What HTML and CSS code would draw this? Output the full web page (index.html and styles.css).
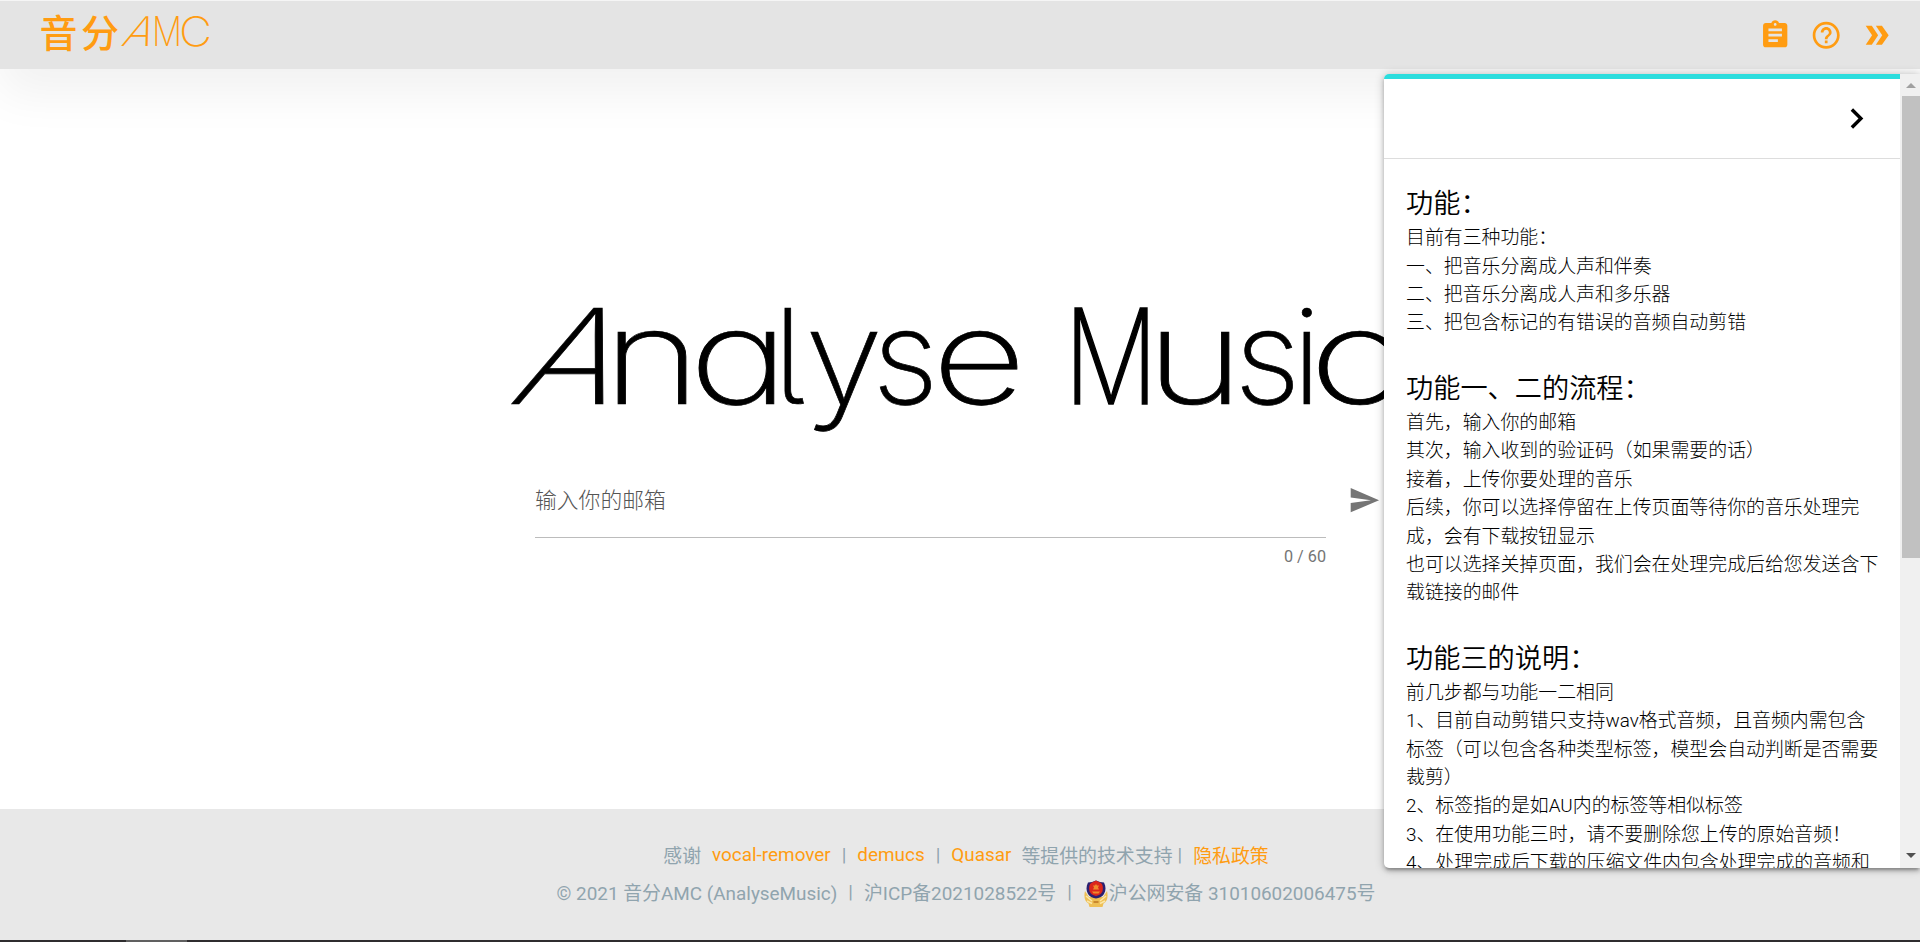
FILE: index.html
```html
<!DOCTYPE html>
<html lang="zh-CN">
<head>
<meta charset="utf-8">
<title>音分AMC</title>
<link rel="stylesheet" href="styles.css">
</head>
<body>
<div class="page">
  <header class="topbar">
    <svg class="brand" width="180" height="56" viewBox="0 0 180 56" role="img" aria-label="音分AMC">
      <text class="brand-cn" x="-0.500 41" y="34">音分</text>
      <text class="brand-en" transform="translate(80 32.500) skewX(-23) scale(1.080 1)">A</text>
      <text class="brand-en" y="32.500"><tspan x="112" textLength="30" lengthAdjust="spacingAndGlyphs">M</tspan><tspan x="139" textLength="33" lengthAdjust="spacingAndGlyphs">C</tspan></text>
    </svg>
    <nav class="actions">
      <svg viewBox="0 0 24 24"><path d="M19 3h-4.180C14.400 1.840 13.300 1 12 1c-1.300 0-2.400.840-2.820 2H5c-1.100 0-2 .9-2 2v14c0 1.100.9 2 2 2h14c1.100 0 2-.9 2-2V5c0-1.100-.9-2-2-2zm-7 0c.550 0 1 .450 1 1s-.450 1-1 1-1-.450-1-1 .450-1 1-1zm2 14H7v-2h7v2zm3-4H7v-2h10v2zm0-4H7V7h10v2z"/></svg>
      <svg viewBox="0 0 24 24"><path d="M11 18h2v-2h-2v2zm1-16C6.480 2 2 6.480 2 12s4.480 10 10 10 10-4.480 10-10S17.520 2 12 2zm0 18c-4.410 0-8-3.590-8-8s3.590-8 8-8 8 3.590 8 8-3.590 8-8 8zm0-14c-2.210 0-4 1.790-4 4h2c0-1.100.9-2 2-2s2 .9 2 2c0 2-3 1.750-3 5h2c0-2.250 3-2.500 3-5 0-2.210-1.790-4-4-4z"/></svg>
      <svg viewBox="0 0 24 24"><path d="M3.500 5H8l4.700 7L8 19H3.500l4.700-7zM11 5h4.500l5 7-5 7H11l4.700-7z"/></svg>
    </nav>
  </header>

  <main class="main">
    <svg class="title" width="900" height="170" viewBox="0 0 900 170" role="img" aria-label="Analyse Music">
      <text class="title-text" transform="translate(5 124) skewX(-23) scale(1.160 1)">A</text>
      <text class="title-text" y="124"><tspan x="101" textLength="98" lengthAdjust="spacingAndGlyphs">n</tspan><tspan x="187" textLength="100" lengthAdjust="spacingAndGlyphs">a</tspan><tspan x="271">l</tspan><tspan x="303" textLength="78" lengthAdjust="spacingAndGlyphs">y</tspan><tspan x="370">s</tspan><tspan x="430" textLength="94" lengthAdjust="spacingAndGlyphs">e</tspan></text>
      <text class="title-text" y="124"><tspan x="562" class="narrow" textLength="94" lengthAdjust="spacingAndGlyphs">M</tspan><tspan x="644" textLength="98" lengthAdjust="spacingAndGlyphs">u</tspan><tspan x="732">s</tspan><tspan x="790">i</tspan><tspan x="807" textLength="95" lengthAdjust="spacingAndGlyphs">c</tspan></text>
    </svg>
    <form class="email">
      <div class="field">
        <div class="placeholder">输入你的邮箱</div>
        <div class="counter">0 / 60</div>
      </div>
      <svg class="send" viewBox="0 0 24 24"><path d="M2 21l21-9L2 3v7l15 2-15 2z"/></svg>
    </form>
  </main>

  <footer class="footer">
    <p class="credits"><span>感谢</span><a>vocal-remover</a><i>|</i><a>demucs</a><i>|</i><a>Quasar</a><span class="support">等提供的技术支持</span><i class="near">|</i><a>隐私政策</a></p>
    <p class="legal"><span>© 2021 音分AMC (AnalyseMusic)</span><i>|</i><span>沪ICP备2021028522号</span><i>|</i><svg class="badge" viewBox="0 0 24 27"><path d="M1 11C-.5 17 1 21.500 4.500 23.500L5.500 27h13l1-3.500C23 21.500 24.500 17 23 11l-4 6H5z" fill="#eebf55"/><path d="M2 16l6 5m-5 0 5 2.500M22 16l-6 5m5 0-5 2.500" stroke="#fbe7a8" stroke-width="1.500"/><path d="M12 .5l4 1.500 4 .5c2 4 2 8 0 11.500-2 3-5 4-8 4.500-3-.5-6-1.500-8-4.500-2-3.500-2-7.500 0-11.500L8 2z" fill="#2a2070"/><path d="M12 .5l4 2 2 1.500c1.500 3 1 7-.5 9-1.500 2-3.500 2.500-5.500 3-2-.5-4-1-5.500-3-1.500-2-2-6-.5-9l2-1.500z" fill="#dc261c"/><path d="M12 4l1 1.500h2L14 7.500l1 2h-6l1-2-1-2h2zM8 11.500h8l-1.500 2h-5z" fill="#f08a2c"/><path d="M9.500 21h5v2h-5z" fill="#c9882e"/></svg><span>沪公网安备 31010602006475号</span></p>
  </footer>
  <div class="edge"></div>
</div>

<aside class="panel">
  <div class="sheet">
    <div class="sheet-head">
      <svg viewBox="0 0 24 24"><path d="M10 6 8.590 7.410 13.170 12l-4.580 4.590L10 18l6-6z"/></svg>
    </div>
    <div class="sheet-body">
      <section>
        <h2>功能：</h2>
        <p>目前有三种功能：</p>
        <p>一、把音乐分离成人声和伴奏</p>
        <p>二、把音乐分离成人声和多乐器</p>
        <p>三、把包含标记的有错误的音频自动剪错</p>
      </section>
      <section>
        <h2>功能一、二的流程：</h2>
        <p>首先，输入你的邮箱</p>
        <p>其次，输入收到的验证码（如果需要的话）</p>
        <p>接着，上传你要处理的音乐</p>
        <p>后续，你可以选择停留在上传页面等待你的音乐处理完<br>成，会有下载按钮显示</p>
        <p>也可以选择关掉页面，我们会在处理完成后给您发送含下<br>载链接的邮件</p>
      </section>
      <section>
        <h2>功能三的说明：</h2>
        <p>前几步都与功能一二相同</p>
        <p>1、目前自动剪错只支持wav格式音频，且音频内需包含<br>标签（可以包含各种类型标签，模型会自动判断是否需要<br>裁剪）</p>
        <p>2、标签指的是如AU内的标签等相似标签</p>
        <p>3、在使用功能三时，请不要删除您上传的原始音频！</p>
        <p>4、处理完成后下载的压缩文件内包含处理完成的音频和</p>
      </section>
    </div>
  </div>
  <div class="scrollbar">
    <span class="arrow up"></span>
    <span class="thumb"></span>
    <span class="arrow down"></span>
  </div>
</aside>
</body>
</html>
```
FILE: styles.css
```css
* { box-sizing: border-box; }
body {
  margin: 0;
  overflow: hidden;
  background: #fff;
  font-family: Roboto, "Noto Sans CJK SC", sans-serif;
}
p, h2 { margin: 0; }
i { font-style: normal; }

.page {
  height: 942px;
  display: flex;
  flex-direction: column;
}
.topbar {
  height: 69px;
  flex: none;
  display: flex;
  justify-content: space-between;
  align-items: flex-start;
  padding: 0 27px 0 40px;
  background: #e4e4e4;
  border-top: 1px solid #f5f5f5;
  box-shadow: 0 24px 48px rgba(0, 0, 0, .06);
}
.brand { margin-top: 12px; fill: #ff9c12; overflow: visible; }
.brand-cn { font: 500 38px "Noto Sans CJK SC", sans-serif; }
.brand-en { font: 200 41px Inter, sans-serif; }
.actions { display: flex; gap: 18.500px; margin-top: 17.500px; }
.actions svg { width: 32.400px; height: 32.400px; fill: #ff9c12; }

.main {
  flex: 1;
  display: flex;
  flex-direction: column;
  padding: 211px 0 0 502px;
}
.title { overflow: visible; }
.title-text {
  font: 200 132px Inter, sans-serif;
  font-feature-settings: "cv11" 1, "cv05" 1;
  fill: #000;
  stroke: #000;
  stroke-width: .7px;
}
.title-text .narrow { stroke-width: 1.600px; }
.email { display: flex; align-items: flex-start; margin: 17px 0 0 33px; }
.field { width: 791px; }
.placeholder {
  height: 71px;
  padding-top: 18px;
  border-bottom: 1px solid #bcbcbc;
  color: #555;
  font-size: 21.800px;
  line-height: 32px;
  font-weight: 300;
}
.counter {
  padding-top: 11px;
  text-align: right;
  font-size: 16.200px;
  line-height: 16px;
  color: #757575;
}
.send { width: 32.400px; height: 32.400px; margin: 17px 0 0 22px; fill: #757575; }

.footer {
  height: 131px;
  flex: none;
  display: flex;
  flex-direction: column;
  align-items: center;
  padding: 26px 0 0 12px;
  background: #e8e8e8;
  color: #90a4ae;
  font-size: 18.900px;
}
.footer p { display: flex; align-items: center; height: 39px; white-space: pre; }
.footer .legal { height: 36px; margin-top: -1px; }
.footer a { color: #ff9c12; }
.footer i { margin: 0 11px; }
.credits span:first-child { margin-right: 11px; }
.credits .support { margin-left: 10px; }
.footer i.near { margin: 0 11px 0 5px; }
.badge { width: 24px; height: 27px; margin: 4px 1px 0 1px; fill: none; }
.edge {
  height: 2px;
  flex: none;
  background: linear-gradient(90deg, #2f2d2f 126px, #606060 126px, #606060 187px, #2f2d2f 187px);
}

.panel {
  position: absolute;
  left: 1384px;
  top: 74px;
  width: 536px;
  height: 794px;
  display: flex;
  overflow: hidden;
  background: #fff;
  border-radius: 5px 0 0 5px;
  box-shadow: 0 1px 10px rgba(0, 0, 0, .25), 0 3px 4px rgba(0, 0, 0, .18), 0 4px 2px -2px rgba(0, 0, 0, .15);
}
.sheet { flex: 1; border-top: 5px solid #2bdddd; }
.sheet-head {
  height: 80px;
  display: flex;
  justify-content: flex-end;
  align-items: center;
  padding-right: 23px;
  border-bottom: 1px solid #ddd;
}
.sheet-head svg { width: 41px; height: 41px; }
.sheet-body { padding: 22px; color: #000; font-weight: 300; }
.sheet-body section + section { margin-top: 28.350px; }
.sheet-body h2 {
  padding-top: 4px;
  font-size: 27.200px;
  line-height: 39.200px;
  font-weight: 350;
  white-space: nowrap;
}
.sheet-body p { font-size: 18.900px; line-height: 28.350px; white-space: nowrap; }

.scrollbar {
  width: 20px;
  display: flex;
  flex-direction: column;
  align-items: flex-end;
  background: #f0f0f0;
  padding: 9px 0 10px 2px;
}
.arrow { margin-right: 4px; border: 5px solid transparent; }
.up { border-top: 0; border-bottom-color: #a0a0a0; }
.thumb { width: 18px; height: 462px; margin-top: 8px; background: #c1c1c1; }
.down { margin-top: auto; border-bottom: 0; border-top-color: #505050; }
```
